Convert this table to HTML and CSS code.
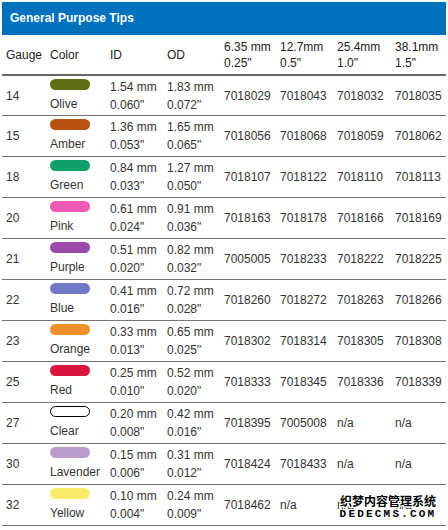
FILE: index.html
```html
<!DOCTYPE html>
<html>
<head>
<meta charset="utf-8">
<link rel="stylesheet" href="styles.css">
</head>
<body>
<div class="panel">
  <div class="title">General Purpose Tips</div>
  <table class="tips">
    <colgroup>
      <col class="c-gauge"><col class="c-color"><col class="c-id"><col class="c-od">
      <col class="c-a"><col class="c-b"><col class="c-c"><col class="c-d">
    </colgroup>
    <thead>
      <tr><th>Gauge</th><th>Color</th><th>ID</th><th>OD</th><th>6.35 mm<br>0.25"</th><th>12.7mm<br>0.5"</th><th>25.4mm<br>1.0"</th><th>38.1mm<br>1.5"</th></tr>
    </thead>
    <tbody>
      <tr><td>14</td><td><span class="pill olive"></span>Olive</td><td>1.54 mm<br>0.060"</td><td>1.83 mm<br>0.072"</td><td>7018029</td><td>7018043</td><td>7018032</td><td>7018035</td></tr>
      <tr><td>15</td><td><span class="pill amber"></span>Amber</td><td>1.36 mm<br>0.053"</td><td>1.65 mm<br>0.065"</td><td>7018056</td><td>7018068</td><td>7018059</td><td>7018062</td></tr>
      <tr><td>18</td><td><span class="pill green"></span>Green</td><td>0.84 mm<br>0.033"</td><td>1.27 mm<br>0.050"</td><td>7018107</td><td>7018122</td><td>7018110</td><td>7018113</td></tr>
      <tr><td>20</td><td><span class="pill pink"></span>Pink</td><td>0.61 mm<br>0.024"</td><td>0.91 mm<br>0.036"</td><td>7018163</td><td>7018178</td><td>7018166</td><td>7018169</td></tr>
      <tr><td>21</td><td><span class="pill purple"></span>Purple</td><td>0.51 mm<br>0.020"</td><td>0.82 mm<br>0.032"</td><td>7005005</td><td>7018233</td><td>7018222</td><td>7018225</td></tr>
      <tr><td>22</td><td><span class="pill blue"></span>Blue</td><td>0.41 mm<br>0.016"</td><td>0.72 mm<br>0.028"</td><td>7018260</td><td>7018272</td><td>7018263</td><td>7018266</td></tr>
      <tr><td>23</td><td><span class="pill orange"></span>Orange</td><td>0.33 mm<br>0.013"</td><td>0.65 mm<br>0.025"</td><td>7018302</td><td>7018314</td><td>7018305</td><td>7018308</td></tr>
      <tr><td>25</td><td><span class="pill red"></span>Red</td><td>0.25 mm<br>0.010"</td><td>0.52 mm<br>0.020"</td><td>7018333</td><td>7018345</td><td>7018336</td><td>7018339</td></tr>
      <tr><td>27</td><td><span class="pill clear"></span>Clear</td><td>0.20 mm<br>0.008"</td><td>0.42 mm<br>0.016"</td><td>7018395</td><td>7005008</td><td>n/a</td><td>n/a</td></tr>
      <tr><td>30</td><td><span class="pill lavender"></span>Lavender</td><td>0.15 mm<br>0.006"</td><td>0.31 mm<br>0.012"</td><td>7018424</td><td>7018433</td><td>n/a</td><td>n/a</td></tr>
      <tr><td>32</td><td><span class="pill yellow"></span>Yellow</td><td>0.10 mm<br>0.004"</td><td>0.24 mm<br>0.009"</td><td>7018462</td><td>n/a</td><td>n/a</td><td>n/a</td></tr>
    </tbody>
  </table>
</div>
<div class="watermark">
  <div class="wm-cn">织梦内容管理系统</div>
  <div class="wm-en">DEDECMS.COM</div>
</div>
</body>
</html>
```
FILE: styles.css
```css
html, body {
  margin: 0;
  padding: 0;
  background: #fff;
}
body {
  padding: 2px;
  font-family: "Liberation Sans", Arial, sans-serif;
  font-size: 12px;
  color: #333;
  overflow: hidden;
}
.panel {
  width: 444px;
}
.title {
  height: 33px;
  background: #0071bc;
  color: #fff;
  font-weight: bold;
  font-size: 12px;
  line-height: 33px;
  padding-left: 8px;
  box-sizing: border-box;
}
.tips {
  width: 444px;
  table-layout: fixed;
  border-collapse: collapse;
  border-spacing: 0;
}
.c-gauge { width: 44px; }
.c-color { width: 60px; }
.c-id { width: 57px; }
.c-od { width: 57px; }
.c-a { width: 56px; }
.c-b { width: 57px; }
.c-c { width: 58px; }
.c-d { width: 55px; }
.tips th {
  font-weight: normal;
  text-align: left;
  color: #222;
  padding: 0 0 0 4px;
  height: 39px;
  line-height: 16px;
  vertical-align: middle;
  white-space: nowrap;
  border-bottom: 2px solid #666;
}
.tips td {
  padding: 0 0 0 4px;
  height: 40px;
  line-height: 18px;
  vertical-align: middle;
  white-space: nowrap;
  border-bottom: 1px solid #777;
}
.tips tbody tr:first-child td { height: 39px; }
.pill {
  display: block;
  width: 40px;
  height: 11px;
  border-radius: 6px;
  margin-bottom: 5px;
  box-sizing: border-box;
}
.olive { background: #5f6e13; }
.amber { background: #b85112; }
.green { background: #10a06a; }
.pink { background: #ee5ab4; }
.purple { background: #9b4aab; }
.blue { background: #7079c6; }
.orange { background: #ef8f2b; }
.red { background: #d8163f; }
.clear { background: #fff; border: 1px solid #000; }
.lavender { background: #b99ccc; }
.yellow { background: #f9ee6b; }
.watermark {
  position: absolute;
  left: 338px;
  top: 494px;
  width: 100px;
  text-align: center;
  color: #000;
  font-weight: bold;
  text-shadow: 1px 0 #fff, -1px 0 #fff, 0 1px #fff, 0 -1px #fff, 1px 1px #fff, -1px -1px #fff, 1px -1px #fff, -1px 1px #fff;
}
.wm-cn {
  font-family: "Noto Sans CJK SC", sans-serif;
  font-size: 12px;
  line-height: 14px;
  letter-spacing: 0;
}
.wm-en {
  font-family: "Liberation Mono", monospace;
  font-size: 11px;
  line-height: 12px;
  letter-spacing: 2.2px;
}
```
